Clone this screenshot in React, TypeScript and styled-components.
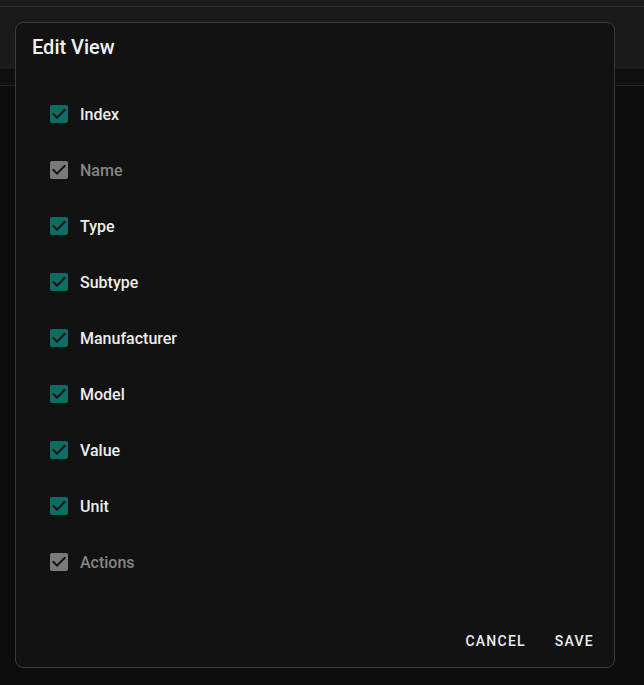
import React from "react"
import styled, { createGlobalStyle } from "styled-components"

const Global = createGlobalStyle`
  html, body {
    margin: 0;
    padding: 0;
    background: #0c0c0c;
    font-family: Roboto, "Liberation Sans", sans-serif;
    -webkit-font-smoothing: antialiased;
  }
`

const Page = styled.div`
  position: relative;
  width: 644px;
  height: 685px;
  overflow: hidden;
  background: #0c0c0c;
`

const TopStrip = styled.div`
  height: 6px;
  background: #1b1b1b;
  border-bottom: 1px solid #2e2e2e;
`

const Toolbar = styled.div`
  height: 62px;
  background: #1a1a1a;
`

const SubBar = styled.div`
  height: 16px;
  background: #0f0f0f;
  border-bottom: 1px solid #222;
`

const Dialog = styled.div`
  position: absolute;
  left: 15px;
  top: 22px;
  width: 600px;
  height: 646px;
  box-sizing: border-box;
  background: #121212;
  border: 1px solid #3b3b3b;
  border-radius: 8px;
  display: flex;
  flex-direction: column;
`

const Title = styled.h2`
  margin: 0;
  padding: 8px 16px;
  font-size: 20px;
  line-height: 32px;
  font-weight: 500;
  color: #f2f2f2;
`

const List = styled.div`
  flex: 1;
  padding: 15px 16px 0 31px;
  display: flex;
  flex-direction: column;
`

const Row = styled.label<{ $disabled?: boolean }>`
  height: 56px;
  display: flex;
  align-items: center;
  gap: 9px;
  font-size: 16px;
  font-weight: 500;
  color: ${p => (p.$disabled ? "#858585" : "#ededed")};
`

const Box = styled.svg<{ $disabled?: boolean }>`
  width: 24px;
  height: 24px;
  flex: none;
  fill: ${p => (p.$disabled ? "#7a7a7a" : "#0b6e60")};
`

const Actions = styled.div`
  display: flex;
  justify-content: flex-end;
  align-items: center;
  gap: 13px;
  padding: 8px 12px 8px 8px;
`

const Button = styled.button`
  height: 36px;
  padding: 0 8px;
  background: transparent;
  border: none;
  font-family: inherit;
  font-size: 14px;
  font-weight: 500;
  letter-spacing: 1.25px;
  text-transform: uppercase;
  color: #ececec;
  cursor: pointer;
`

const columns = [
  { name: "Index" },
  { name: "Name", locked: true },
  { name: "Type" },
  { name: "Subtype" },
  { name: "Manufacturer" },
  { name: "Model" },
  { name: "Value" },
  { name: "Unit" },
  { name: "Actions", locked: true },
]

const Check = ({ disabled }: { disabled?: boolean }) => (
  <Box $disabled={disabled} viewBox="0 0 24 24">
    <path d="M19 3H5c-1.11 0-2 .9-2 2v14c0 1.1.89 2 2 2h14c1.11 0 2-.9 2-2V5c0-1.1-.89-2-2-2zm-9 14l-5-5 1.41-1.41L10 14.17l7.59-7.59L19 8l-9 9z" />
  </Box>
)

const App = () => {
  return (
    <Page>
      <Global />
      <TopStrip />
      <Toolbar />
      <SubBar />
      <Dialog>
        <Title>Edit View</Title>
        <List>
          {columns.map(c => (
            <Row key={c.name} $disabled={c.locked}>
              <Check disabled={c.locked} />
              {c.name}
            </Row>
          ))}
        </List>
        <Actions>
          <Button>Cancel</Button>
          <Button>Save</Button>
        </Actions>
      </Dialog>
    </Page>
  )
}

export default App
